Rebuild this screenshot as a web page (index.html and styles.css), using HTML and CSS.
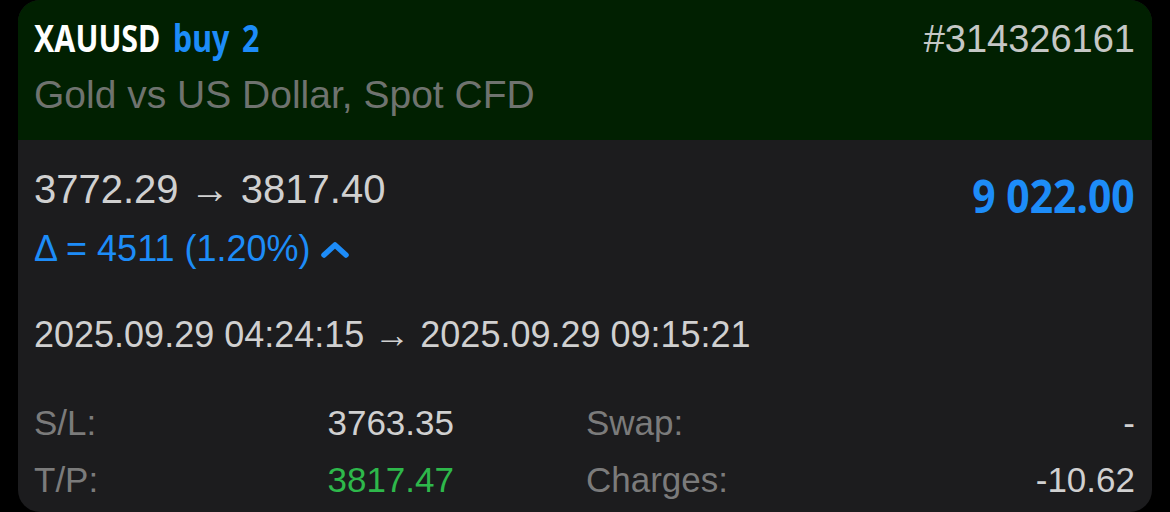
FILE: index.html
```html
<!doctype html>
<html>
<head>
	<meta charset="utf-8">
	<title>XAUUSD position</title>
	<link rel="stylesheet" href="styles.css">
</head>
<body>
	<div class="card">
		<div class="head">
			<div class="head-top">
				<div class="title"><span class="sym">XAUUSD</span> <span class="side">buy 2</span></div>
				<div class="ticket">#314326161</div>
			</div>
			<div class="desc">Gold vs US Dollar, Spot CFD</div>
		</div>
		<div class="body">
			<div class="price-row">
				<div class="price-info">
					<div class="prices">3772.29 → 3817.40</div>
					<div class="delta">Δ = 4511 (1.20%)
						<svg class="chev" width="28" height="18" viewBox="0 0 28 18"><polyline points="3,15 14,5 25,15" fill="none" stroke="#1d8cf8" stroke-width="5.5" stroke-linecap="round" stroke-linejoin="round"/></svg>
					</div>
				</div>
				<div class="profit">9 022.00</div>
			</div>
			<div class="times">2025.09.29 04:24:15 → 2025.09.29 09:15:21</div>
			<div class="stats">
				<div class="stat"><span class="lbl">S/L:</span><span class="val">3763.35</span></div>
				<div class="stat"><span class="lbl">Swap:</span><span class="val">-</span></div>
				<div class="stat"><span class="lbl">T/P:</span><span class="val tp">3817.47</span></div>
				<div class="stat"><span class="lbl">Charges:</span><span class="val">-10.62</span></div>
			</div>
		</div>
	</div>
</body>
</html>
```
FILE: styles.css
```css
*{
	margin:0;
	padding:0;
	box-sizing:border-box;
}
body{
	background:#000;
	font-family:"Liberation Sans",Arial,sans-serif;
}
.card{
	margin-left:18px;
	width:1134px;
	height:512px;
	border-radius:22px;
	overflow:hidden;
	background:#1c1c1e;
}
.head{
	height:140px;
	padding:15px 17px 0 16px;
	background:#012001;
}
.head-top{
	display:flex;
	justify-content:space-between;
	align-items:baseline;
}
/* no narrow bold face installed, so squeeze the bold one */
.title{
	font-family:"Noto Sans","DejaVu Sans",sans-serif;
	font-weight:bold;
	font-size:38px;
	line-height:44px;
	word-spacing:6px;
	color:#fff;
	transform:scaleX(0.8);
	transform-origin:left center;
}
.side{
	color:#1d8cf8;
}
.ticket{
	font-size:38px;
	line-height:40px;
	color:#c5c7c5;
}
.desc{
	margin-top:16px;
	font-size:39px;
	line-height:40px;
	color:#6f736f;
}
.body{
	padding:27px 17px 0 16px;
}
.price-row{
	display:flex;
	justify-content:space-between;
	align-items:flex-start;
}
.prices{
	font-size:40px;
	line-height:44px;
	color:#d0d0d0;
}
.delta{
	margin-top:18px;
	display:flex;
	align-items:center;
	gap:10px;
	font-size:36px;
	line-height:40px;
	color:#1d8cf8;
}
.profit{
	margin-top:2px;
	font-family:"Noto Sans","DejaVu Sans",sans-serif;
	font-weight:bold;
	font-size:47px;
	line-height:52px;
	color:#1d8cf8;
	transform:scaleX(0.87);
	transform-origin:right center;
}
.times{
	margin-top:46px;
	font-size:36px;
	line-height:40px;
	color:#d0d0d0;
}
.stats{
	margin-top:48px;
	display:grid;
	grid-template-columns:420px 1fr;
	column-gap:132px;
	row-gap:17px;
	font-size:35px;
	line-height:40px;
}
.stat{
	display:flex;
	justify-content:space-between;
}
.lbl{
	color:#7b7b7b;
}
.val{
	color:#d0d0d0;
}
.val.tp{
	color:#2eb84b;
}
```
